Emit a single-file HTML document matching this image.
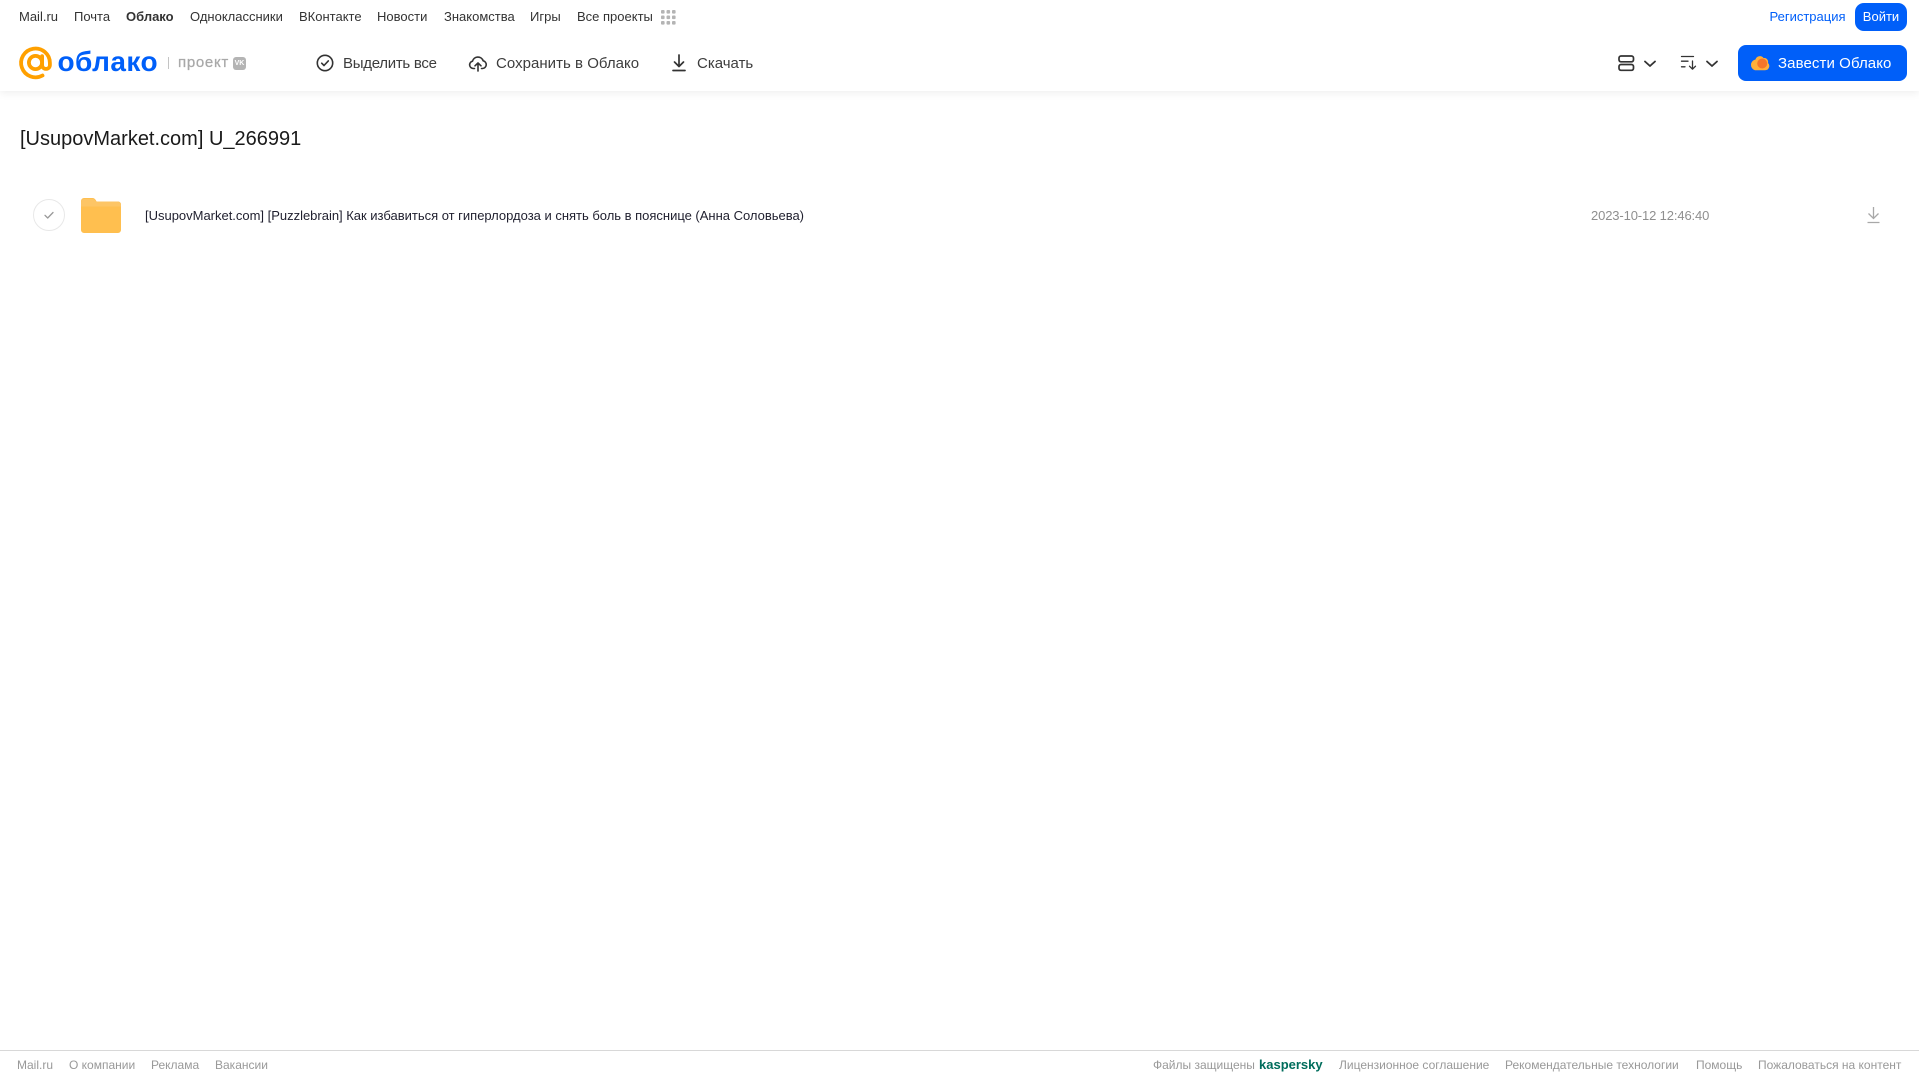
<!DOCTYPE html>
<html lang="ru"><head><meta charset="utf-8"><title>Облако</title>
<style>
html,body{margin:0;padding:0;width:1919px;height:1079px;overflow:hidden;background:#fff;font-family:"Liberation Sans",Arial,sans-serif}
.t{position:absolute;white-space:nowrap;line-height:16px}
.n{top:9px;font-size:13px;color:#333}
.a{top:55.500px;font-size:15px;color:#3d3d3d;height:16px}
.f{top:1057px;font-size:12px;color:#999}
svg{position:absolute;overflow:visible}
</style></head><body>
<div style="position:absolute;left:0;top:0;width:1919px;height:91px;background:#fff;box-shadow:0 2px 8px rgba(0,0,0,.07)"></div>

<span class="t n" style="left:19px">Mail.ru</span>
<span class="t n" style="left:74px">Почта</span>
<span class="t n" style="left:126px;font-weight:bold">Облако</span>
<span class="t n" style="left:190px">Одноклассники</span>
<span class="t n" style="left:299px">ВКонтакте</span>
<span class="t n" style="left:377px">Новости</span>
<span class="t n" style="left:444px">Знакомства</span>
<span class="t n" style="left:530px">Игры</span>
<span class="t n" style="left:577px">Все проекты</span>
<svg style="left:661px;top:10px" width="15" height="15" fill="#b4b4b4"><rect x="0" y="0" width="3.6" height="3.6" rx="1"/><rect x="5.500" y="0" width="3.6" height="3.6" rx="1"/><rect x="11" y="0" width="3.6" height="3.6" rx="1"/><rect x="0" y="5.500" width="3.6" height="3.6" rx="1"/><rect x="5.500" y="5.500" width="3.6" height="3.6" rx="1"/><rect x="11" y="5.500" width="3.6" height="3.6" rx="1"/><rect x="0" y="11" width="3.6" height="3.6" rx="1"/><rect x="5.500" y="11" width="3.6" height="3.6" rx="1"/><rect x="11" y="11" width="3.6" height="3.6" rx="1"/></svg>

<span class="t n" style="left:1769.500px;color:#005ff9">Регистрация</span>
<div style="position:absolute;left:1855px;top:3px;width:52px;height:28px;border-radius:9px;background:#005ff9;color:#fff;font-size:13px;line-height:28px;text-align:center">Войти</div>

<svg style="left:19px;top:47px" width="33" height="32" viewBox="0 0 33 32" fill="none" stroke="#ffa000" stroke-width="3.800"><circle cx="16.500" cy="15.500" r="6.600"/><path d="M23.100 9.200V18a3.900 3.900 0 0 0 7.800 0V16A14.400 14.400 0 1 0 23.500 28.500" stroke-linecap="round"/></svg>
<span class="t" style="left:57.500px;top:44px;font-size:28px;line-height:36px;font-weight:bold;color:#005ff9;letter-spacing:.45px">облако</span>
<div style="position:absolute;left:168px;top:57px;width:1px;height:12px;background:#c4c4c4"></div>
<span class="t" style="left:178px;top:55px;font-size:15px;color:#a8a8a8;letter-spacing:.7px;-webkit-text-stroke:.25px #a8a8a8">проект</span>
<div style="position:absolute;left:233px;top:57px;width:13px;height:13px;border-radius:3px;background:#b4b4b4;color:#fff;font-size:7px;font-weight:bold;line-height:13px;text-align:center">VK</div>

<svg style="left:316px;top:54px" width="18" height="18" viewBox="0 0 18 18" fill="none" stroke="#333" stroke-width="1.600" stroke-linecap="round" stroke-linejoin="round"><circle cx="9" cy="9" r="7.700"/><path d="M5.700 9.200l2.300 2.300 4.300-4.600"/></svg>
<span class="t a" style="left:343px;letter-spacing:-.28px">Выделить все</span>
<svg style="left:469px;top:54px" width="18" height="18" viewBox="0 0 18 18" fill="none" stroke="#333" stroke-width="1.600" stroke-linecap="round" stroke-linejoin="round"><path d="M5.500 14.500H4.500A3.700 3.700 0 0 1 3.500 7.200 5.600 5.600 0 0 1 14.200 6.800 3.900 3.900 0 0 1 13.500 14.500H12.500"/><path d="M9 17V9M6 11.800 9 9l3 2.800"/></svg>
<span class="t a" style="left:496px;letter-spacing:.03px">Сохранить в Облако</span>
<svg style="left:671px;top:54px" width="16" height="18" viewBox="0 0 16 18" fill="none" stroke="#333" stroke-width="1.700" stroke-linecap="round" stroke-linejoin="round"><path d="M8 1v11M3.500 8l4.500 4.500L12.500 8"/><path d="M2 16.500h12"/></svg>
<span class="t a" style="left:697px">Скачать</span>

<svg style="left:1618px;top:55px" width="17" height="17" viewBox="0 0 17 17" fill="none" stroke="#333" stroke-width="1.700"><rect x="1" y="1" width="14.500" height="5.800" rx="2"/><rect x="1" y="9.500" width="14.500" height="5.800" rx="2"/></svg>
<svg style="left:1644px;top:60px" width="12" height="8" viewBox="0 0 12 8" fill="none" stroke="#333" stroke-width="1.800" stroke-linecap="round" stroke-linejoin="round"><path d="M1 1.500l5 4.500 5-4.500"/></svg>
<svg style="left:1680px;top:55px" width="17" height="16" viewBox="0 0 17 16" fill="none" stroke="#333" stroke-width="1.300" stroke-linecap="round" stroke-linejoin="round"><path d="M1.500 1.500h12M1.500 6.200h6.500M1.500 11.800h3.500"/><path d="M12.500 6v8M9.500 11.200l3 3 3-3"/></svg>
<svg style="left:1706px;top:60px" width="12" height="8" viewBox="0 0 12 8" fill="none" stroke="#333" stroke-width="1.800" stroke-linecap="round" stroke-linejoin="round"><path d="M1 1.500l5 4.500 5-4.500"/></svg>

<div style="position:absolute;left:1738px;top:45px;width:169px;height:36px;border-radius:8px;background:#005ff9"></div>
<svg style="left:1750px;top:54px" width="20" height="18" viewBox="0 0 20 18"><path d="M5 16.200h10a4.200 4.200 0 0 0 3-7.200A4 4 0 0 0 13.500 4 4.500 4.500 0 0 0 5.500 5.500 5.500 5.500 0 0 0 1 10.500 5.500 5.500 0 0 0 5 16.200z" fill="#ffb03a"/><circle cx="12.200" cy="9.500" r="5" fill="#f5762a"/></svg>
<span class="t a" style="left:1778px;color:#fff;letter-spacing:.09px">Завести Облако</span>

<span class="t" style="left:20px;top:126px;font-size:20px;line-height:26px;color:#1a1a1a">[UsupovMarket.com] U_266991</span>

<svg style="left:33px;top:199px" width="32" height="32" viewBox="0 0 32 32" fill="none"><circle cx="16" cy="16" r="15.500" stroke="#e8e8e8"/><path d="M12 16.300l2.700 2.700 5.300-5.500" stroke="#999" stroke-width="1.300" stroke-linecap="round" stroke-linejoin="round"/></svg>
<svg style="left:81px;top:198px" width="40" height="35" viewBox="0 0 40 35"><path d="M3 0h8.500c1.500 0 2.500.8 3.500 2.500l.6 1H37a3 3 0 0 1 3 3V32a3 3 0 0 1-3 3H3a3 3 0 0 1-3-3V3a3 3 0 0 1 3-3z" fill="#ffbf4f"/><path d="M0 8.500V4a3 3 0 0 1 3-3h8.500c1.500 0 2.500.8 3.500 2.500H37a3 3 0 0 1 3 3v2z" fill="#fdc565"/></svg>
<span class="t" style="left:145px;top:208px;font-size:13px;color:#1f1f2e;letter-spacing:-.01px">[UsupovMarket.com] [Puzzlebrain] Как избавиться от гиперлордоза и снять боль в пояснице (Анна Соловьева)</span>
<span class="t" style="left:1591px;top:208px;font-size:13px;color:#8f8f8f;letter-spacing:-.13px">2023-10-12 12:46:40</span>
<svg style="left:1866px;top:206px" width="15" height="18" viewBox="0 0 15 18" fill="none" stroke="#a8a8a8" stroke-width="1.300"><path d="M7.500 1v11M2.500 7.500l5 5 5-5M1.500 16.500h12"/></svg>

<div style="position:absolute;left:0;top:1050px;width:1919px;height:1px;background:#d8d8d8"></div>
<span class="t f" style="left:17px">Mail.ru</span>
<span class="t f" style="left:69px">О компании</span>
<span class="t f" style="left:151px">Реклама</span>
<span class="t f" style="left:215px">Вакансии</span>
<span class="t f" style="left:1153px">Файлы защищены</span>
<span class="t f" style="left:1259px;color:#006d5c;font-weight:bold;font-size:13px">kaspersky</span>
<span class="t f" style="left:1339px">Лицензионное соглашение</span>
<span class="t f" style="left:1505px">Рекомендательные технологии</span>
<span class="t f" style="left:1696px">Помощь</span>
<span class="t f" style="left:1758px">Пожаловаться на контент</span>
</body></html>
